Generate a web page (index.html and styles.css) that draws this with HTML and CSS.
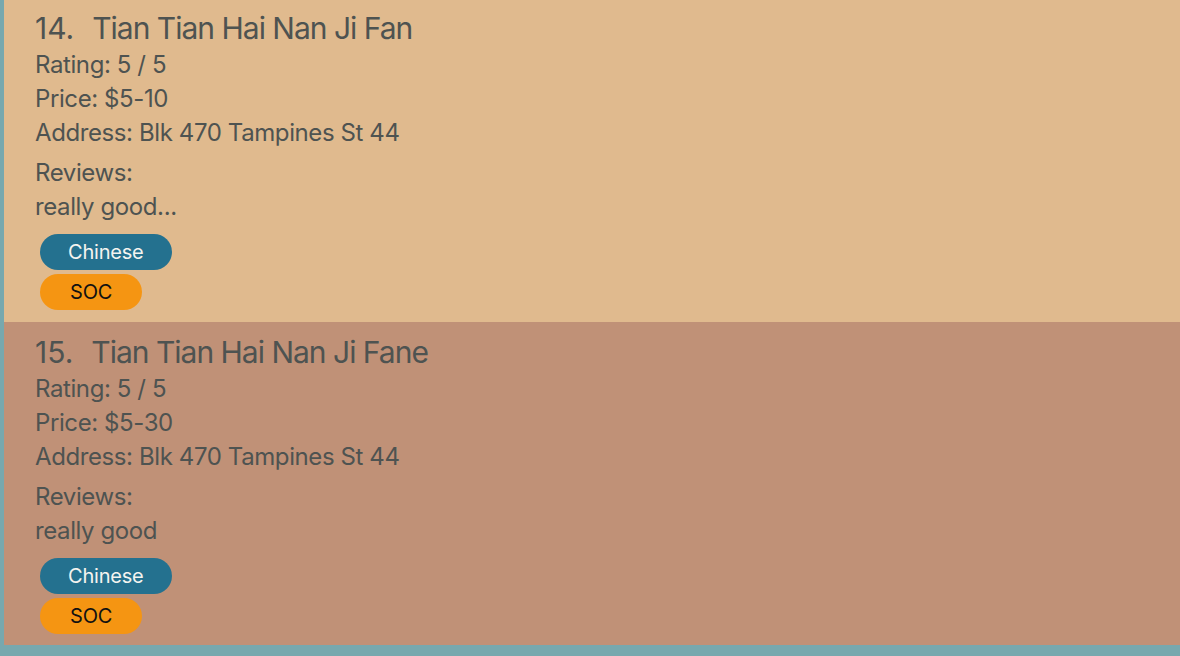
FILE: index.html
```html
<!DOCTYPE html>
<html>
<head>
<meta charset="utf-8">
<link rel="stylesheet" href="styles.css">
</head>
<body>
<div class="list">
  <div class="card card-a">
    <div class="title"><span class="num">14.</span>Tian Tian Hai Nan Ji Fan</div>
    <div class="line">Rating: 5 / 5</div>
    <div class="line">Price: $5-10</div>
    <div class="line">Address: Blk 470 Tampines St 44</div>
    <div class="line reviews">Reviews:</div>
    <div class="line">really good...</div>
    <div class="tags">
      <span class="tag tag-blue">Chinese</span>
      <span class="tag tag-orange">SOC</span>
    </div>
  </div>
  <div class="card card-b">
    <div class="title"><span class="num">15.</span>Tian Tian Hai Nan Ji Fane</div>
    <div class="line">Rating: 5 / 5</div>
    <div class="line">Price: $5-30</div>
    <div class="line">Address: Blk 470 Tampines St 44</div>
    <div class="line reviews">Reviews:</div>
    <div class="line">really good</div>
    <div class="tags">
      <span class="tag tag-blue">Chinese</span>
      <span class="tag tag-orange">SOC</span>
    </div>
  </div>
</div>
</body>
</html>
```

FILE: styles.css
```css
html, body {
  margin: 0;
  padding: 0;
  background: #77a8ae;
  height: 100%;
}
body {
  font-family: Inter, "Liberation Sans", sans-serif;
  color: #4e5351;
}
.list {
  padding-left: 4px;
  display: flex;
  flex-direction: column;
}
.card {
  height: 323px;
  box-sizing: border-box;
  padding: 10px 0 0 31px;
  display: flex;
  flex-direction: column;
}
.card-a { background: #e0ba8e; height: 322px; padding-top: 8px; }
.card-b { background: #c09177; }
.title {
  font-size: 30px;
  line-height: 40px;
  letter-spacing: -1px;
}
.num { margin-right: 18px; letter-spacing: 0; }
.line {
  font-size: 24px;
  line-height: 34px;
  letter-spacing: -0.4px;
}
.reviews { margin-top: 6px; }
.tags {
  display: flex;
  flex-direction: column;
  align-items: flex-start;
  gap: 4px;
  margin-top: 10px;
  padding-left: 5px;
}
.tag {
  height: 36px;
  line-height: 36px;
  border-radius: 18px;
  padding: 0 28px;
  font-size: 20px;
  letter-spacing: -0.2px;
}
.tag-blue { background: #24718f; color: #f4f4f0; }
.tag-orange { background: #f59512; color: #111; padding: 0 30px; }
```
